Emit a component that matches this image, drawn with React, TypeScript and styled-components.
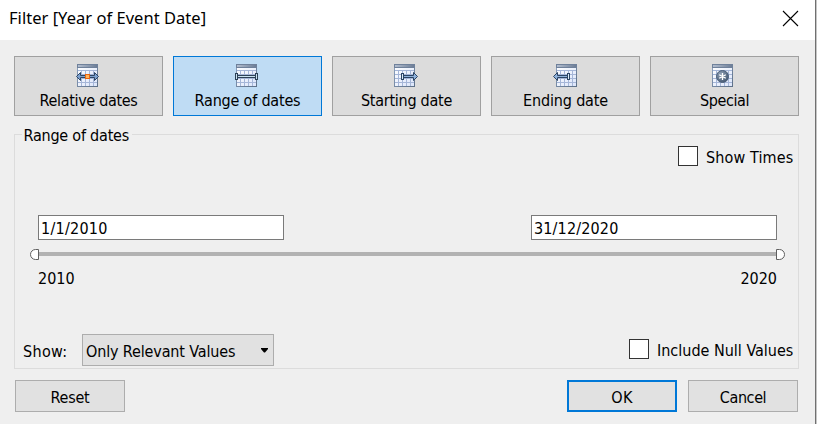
import React from 'react';
import styled, { createGlobalStyle } from 'styled-components';

const GlobalStyle = createGlobalStyle`
  * { box-sizing: border-box; }
  body { margin: 0; background: #fff; }
`;

const Dialog = styled.div`
  width: 817px;
  height: 424px;
  display: flex;
  flex-direction: column;
  background: #efefef;
  border-right: 1px solid #c6c6c6;
  box-shadow: inset -1px 0 0 #707070;
  color: #000;
  font-family: 'DejaVu Sans Condensed', 'DejaVu Sans', sans-serif;
  font-size: 16px;
  line-height: 19px;
  overflow: hidden;
`;

const TitleBar = styled.header`
  height: 40px;
  flex: none;
  margin-right: 1px;
  padding: 0 16px 4px 9px;
  display: flex;
  align-items: center;
  justify-content: space-between;
  background: #fff;
`;

const Title = styled.h1`
  margin: 0;
  font: 400 16.5px/22px 'Noto Sans', sans-serif;
  letter-spacing: 0.03px;
  white-space: nowrap;
`;

const CloseButton = styled.button`
  padding: 0;
  border: 0;
  background: none;
  display: flex;
`;

const Label = styled.span<{ $track?: number }>`
  letter-spacing: ${(p) => p.$track ?? 0}px;
  white-space: nowrap;
`;

const Modes = styled.nav`
  display: grid;
  grid-template-columns: repeat(5, 149px);
  gap: 10px;
  padding: 16px 0 0 14px;
`;

const ModeButton = styled.button<{ $active: boolean }>`
  height: 60px;
  padding: 7px 0 0;
  display: flex;
  flex-direction: column;
  align-items: center;
  gap: 3px;
  font: inherit;
  color: inherit;
  background: ${(p) => (p.$active ? '#bfdcf4' : '#dcdcdc')};
  border: 1px solid ${(p) => (p.$active ? '#0078d7' : '#a0a0a0')};
`;

const Group = styled.section`
  width: 785px;
  height: 235px;
  flex: none;
  margin: 18px 0 0 14px;
  border: 1px solid #dcdcdc;
  display: flex;
  flex-direction: column;
`;

const Legend = styled.h2`
  align-self: flex-start;
  height: 19px;
  width: 110px;
  margin: -9px 0 0 7px;
  padding-left: 1.5px;
  background: #efefef;
  font: inherit;
`;

const CheckRow = styled.label`
  display: flex;
  align-items: flex-start;
  justify-content: flex-end;
  gap: 8px;
`;

const TopCheck = styled(CheckRow)`
  margin: 1px 5px 0 0;
`;

const Box = styled.span`
  width: 20px;
  height: 20px;
  border: 1px solid #333;
  background: #fff;
`;

const CheckText = styled(Label)<{ $width: number }>`
  width: ${(p) => p.$width}px;
  padding-top: 2px;
  height: 21px;
`;

const Dates = styled.div`
  display: flex;
  justify-content: space-between;
  margin: 48px 21px 0 23px;
`;

const DateField = styled.div`
  width: 246px;
  height: 25px;
  padding: 3px 2px 0;
  border: 1px solid #7a7a7a;
  background: #fff;
`;

const Slider = styled.div`
  display: flex;
  align-items: center;
  height: 11px;
  margin: 9px 13px 0 15px;
`;

const Track = styled.div`
  flex: 1;
  height: 4px;
  margin-bottom: 1px;
  background: #b2b2b2;
`;

const Handle = styled.div<{ $side: 'start' | 'end' }>`
  width: 9px;
  height: 11px;
  border: 1px solid #606060;
  background: #fff;
  border-radius: ${(p) => (p.$side === 'start' ? '6px 0 0 6px' : '0 6px 6px 0')};
`;

const Scale = styled.div`
  display: flex;
  justify-content: space-between;
  margin: 9px 21px 0 23px;
`;

const Options = styled.div`
  display: flex;
  align-items: flex-start;
  justify-content: space-between;
  margin: 46px 5px 0 8px;
`;

const ShowRow = styled.div`
  display: flex;
  align-items: center;
`;

const ShowLabel = styled(Label)`
  width: 59px;
  padding-top: 2px;
`;

const Select = styled.button`
  width: 192px;
  height: 32px;
  padding: 1px 5px 0 3px;
  display: flex;
  align-items: center;
  justify-content: space-between;
  font: inherit;
  color: inherit;
  background: #e1e1e1;
  border: 1px solid #adadad;
`;

const SelectText = styled(Label)`
  padding-top: 1px;
`;

const BottomCheck = styled(CheckRow)`
  margin-top: 5px;
`;

const Footer = styled.footer`
  display: flex;
  margin: 11px 0 0 15px;
`;

const Button = styled.button<{ $primary?: boolean }>`
  width: 110px;
  height: 32px;
  padding: 2px 0 0;
  display: flex;
  align-items: center;
  justify-content: center;
  font: inherit;
  color: inherit;
  background: #e1e1e1;
  border: ${(p) => (p.$primary ? '2px solid #0078d7' : '1px solid #adadad')};
`;

const Actions = styled.div`
  display: flex;
  gap: 11px;
  margin-left: 442px;
`;

type Mode = 'relative' | 'range' | 'start' | 'end' | 'special';

// Left edge of the calendar page inside the 29px wide icon canvas.
const pageX: Record<Mode, number> = { relative: 3, range: 3, start: 2, end: 5, special: 2 };

const CalendarIcon = ({ mode }: { mode: Mode }) => (
  <svg width="29" height="24" viewBox="0 0 29 24" shapeRendering="crispEdges">
    <defs>
      <linearGradient id={`head-${mode}`}>
        <stop offset="0" stopColor="#b4bfd0" />
        <stop offset="1" stopColor="#6b7c95" />
      </linearGradient>
      <linearGradient id={`page-${mode}`} x2="1" y2="1">
        <stop offset="0" stopColor="#fff" />
        <stop offset="1" stopColor="#dbe5fa" />
      </linearGradient>
      <linearGradient id={`edge-${mode}`} x2="1" y2="1">
        <stop offset="0" stopColor="#8fa3c0" />
        <stop offset="1" stopColor="#5d7088" />
      </linearGradient>
      <radialGradient id={`disc-${mode}`} cx=".35" cy=".3" r=".8">
        <stop offset="0" stopColor="#8fa0b5" />
        <stop offset="1" stopColor="#40546e" />
      </radialGradient>
    </defs>
    <g transform={`translate(${pageX[mode]} 0)`}>
      <rect x=".5" y=".5" width="20" height="22" fill={`url(#page-${mode})`} stroke={`url(#edge-${mode})`} />
      <path
        d="M1 6.5h19M1 10.5h19M1 14.5h19M1 18.5h19M4.5 7v15M8.5 7v15M12.5 7v15M16.5 7v15"
        stroke="#a5b6d8"
        fill="none"
      />
      <rect x=".5" y=".5" width="20" height="3" fill={`url(#head-${mode})`} stroke="#6f819b" />
      {mode === 'relative' && (
        <g stroke="#2c4564" fill="#7ca0cf" shapeRendering="auto">
          <path d="M-.5 12.5l4-4v3h14v-3l4 4-4 4v-3h-14v3z" />
          <rect x="8.5" y="10.5" width="4" height="4" fill="#ffb55e" stroke="#e86410" />
        </g>
      )}
      {mode === 'range' && (
        <g stroke="#2c4156" fill="#c9e2f2">
          <rect x="1.5" y="11.5" width="18" height="2" />
          <rect x="-.5" y="9.5" width="2" height="6" />
          <rect x="19.5" y="9.5" width="2" height="6" />
        </g>
      )}
      {mode === 'start' && (
        <g stroke="#2c4564" fill="#8fb2dc" shapeRendering="auto">
          <path d="M9.5 11.5h10v-3l4 4-4 4v-3h-10z" />
          <rect x="7.5" y="9.5" width="2" height="6" fill="#dcecf8" />
        </g>
      )}
      {mode === 'end' && (
        <g stroke="#2c4564" fill="#8fb2dc" shapeRendering="auto">
          <path d="M11.5 11.5h-10v-3l-4 4 4 4v-3h10z" />
          <rect x="11.5" y="9.5" width="2" height="6" fill="#dcecf8" />
        </g>
      )}
      {mode === 'special' && (
        <g shapeRendering="auto">
          <circle cx="10.5" cy="12.5" r="6" fill={`url(#disc-${mode})`} stroke="#4c607b" />
          <path d="M10.5 9v7M7.2 10.7l6.6 3.6M7.2 14.3l6.6-3.6" stroke="#fff" strokeWidth="1.3" />
        </g>
      )}
    </g>
  </svg>
);

const modes: { mode: Mode; label: string; track: number }[] = [
  { mode: 'relative', label: 'Relative dates', track: -0.32 },
  { mode: 'range', label: 'Range of dates', track: -0.2 },
  { mode: 'start', label: 'Starting date', track: -0.26 },
  { mode: 'end', label: 'Ending date', track: -0.15 },
  { mode: 'special', label: 'Special', track: -0.38 },
];

export default function App() {
  return (
    <>
      <GlobalStyle />
      <Dialog>
        <TitleBar>
          <Title>Filter [Year of Event Date]</Title>
          <CloseButton aria-label="Close">
            <svg width="17" height="17" viewBox="0 0 17 17">
              <path d="M1 1l15 15M16 1L1 16" stroke="#000" strokeWidth="1.1" />
            </svg>
          </CloseButton>
        </TitleBar>
        <Modes>
          {modes.map((m) => (
            <ModeButton key={m.mode} $active={m.mode === 'range'}>
              <CalendarIcon mode={m.mode} />
              <Label $track={m.track}>{m.label}</Label>
            </ModeButton>
          ))}
        </Modes>
        <Group>
          <Legend>
            <Label $track={-0.22}>Range of dates</Label>
          </Legend>
          <TopCheck>
            <Box />
            <CheckText $width={87} $track={0.12}>Show Times</CheckText>
          </TopCheck>
          <Dates>
            <DateField><Label $track={0.25}>1/1/2010</Label></DateField>
            <DateField><Label $track={0.15}>31/12/2020</Label></DateField>
          </Dates>
          <Slider>
            <Handle $side="start" />
            <Track />
            <Handle $side="end" />
          </Slider>
          <Scale>
            <Label>2010</Label>
            <Label>2020</Label>
          </Scale>
          <Options>
            <ShowRow>
              <ShowLabel $track={0.35}>Show:</ShowLabel>
              <Select>
                <SelectText $track={-0.14}>Only Relevant Values</SelectText>
                <svg width="7" height="5" viewBox="0 0 7 5">
                  <path d="M0 0h7v1L4 4.5H3L0 1z" />
                </svg>
              </Select>
            </ShowRow>
            <BottomCheck>
              <Box />
              <CheckText $width={136} $track={0}>Include Null Values</CheckText>
            </BottomCheck>
          </Options>
        </Group>
        <Footer>
          <Button><Label $track={-0.2}>Reset</Label></Button>
          <Actions>
            <Button $primary><Label $track={0.4}>OK</Label></Button>
            <Button><Label $track={-0.4}>Cancel</Label></Button>
          </Actions>
        </Footer>
      </Dialog>
    </>
  );
}
